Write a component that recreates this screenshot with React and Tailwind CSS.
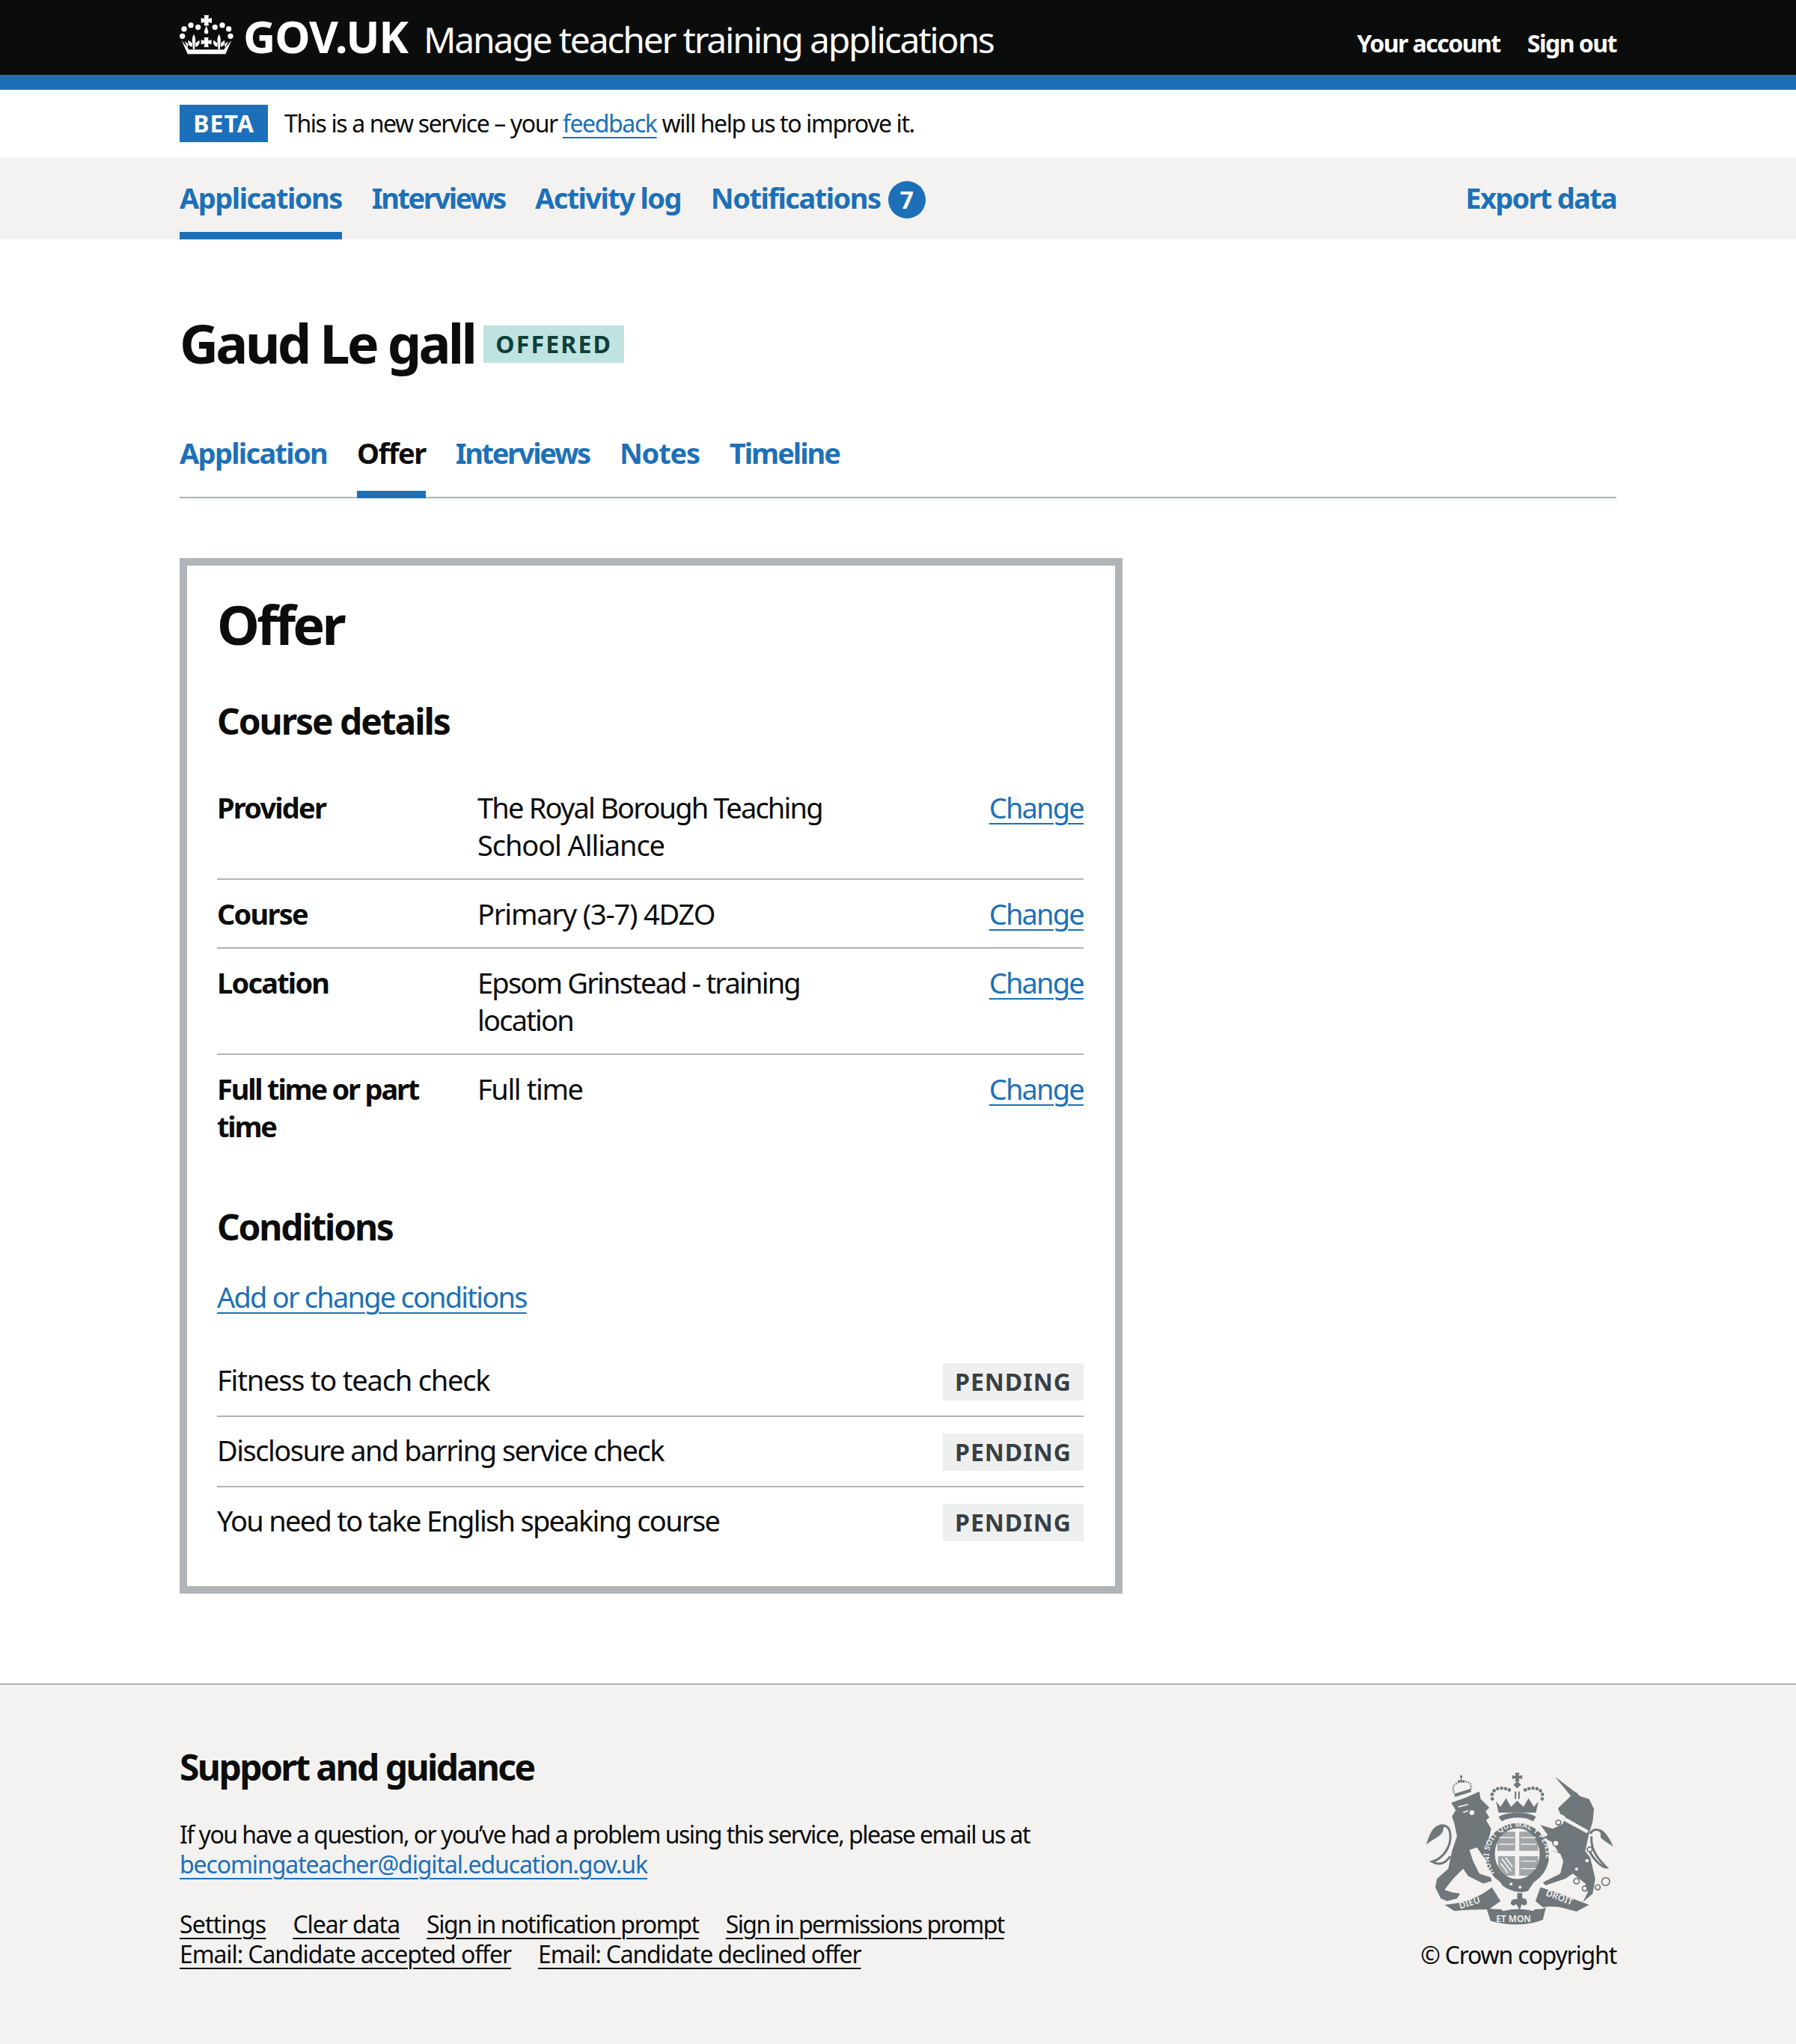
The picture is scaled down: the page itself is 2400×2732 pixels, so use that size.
import React from 'react';

const LINK = 'text-[#1d70b8] underline decoration-2 underline-offset-[6px]';

function Fleur({ cx }) {
  return (
    <path
      d={`M${cx} 140C${cx + 8} 155 ${cx + 8} 165 ${cx + 4} 180L${cx + 4} 200L${cx - 4} 200L${cx - 4} 180C${cx - 8} 165 ${cx - 8} 155 ${cx} 140Z
      M${cx - 6} 176L${cx - 22} 164C${cx - 26} 180 ${cx - 16} 192 ${cx - 6} 190Z
      M${cx + 6} 176L${cx + 22} 164C${cx + 26} 180 ${cx + 16} 192 ${cx + 6} 190Z`}
    />
  );
}

function CrownLogo() {
  return (
    <svg viewBox="0 0 360 270" className="w-[120px] h-[90px] shrink-0 absolute left-[-20px] top-[-18px]" fill="#fff">
      {[[78, 119], [105, 104], [134, 112], [202, 112], [231, 104], [257, 119], [71, 148], [264, 148]].map(([cx, cy]) => (
        <circle key={cx + '-' + cy} cx={cx} cy={cy} r="11" />
      ))}
      <path d="M158 64h19l-2 14 14-3v20l-14-3 2 14h-19l2-14-14 3V75l14 3z" />
      <path d="M167 106c4 12 8 18 8 25a8 8 0 0 1-16 0c0-7 4-13 8-25z" />
      <path d="M158 153h18l-2 13 14-3v18l-14-3 2 14h-18l2-14-14 3v-18l14 3z" />
      <Fleur cx={117} />
      <Fleur cx={218} />
      <path d="M68 165L98 202L237 202L268 165L244 220L92 220Z" />
      <path d="M80 168L95 180L92 196Z M255 168L240 180L243 196Z" />
    </svg>
  );
}

// royal arms, traced by hand from the reference
function Crest() {
  const c = '#6f777b';
  const bg = '#f3f2f1';
  const dots = [[397, 190], [396, 172], [404, 157], [418, 149], [434, 147], [450, 149], [465, 154], [597, 190], [598, 172], [590, 157], [576, 149], [560, 147], [544, 149], [529, 154]];
  return (
    <svg viewBox="120 75 775 630" className="w-[258px] h-[210px]">
      {/* lion */}
      <path fill={c} d="M232 205L290 185L345 160L350 190L385 225L370 240L385 265L372 275L392 310L385 345L370 380L405 420L400 440L370 435L335 385L305 395L320 440L345 490L390 505L395 520L360 530L300 500L280 470L240 510L205 555L235 565L268 570L255 590L215 600L190 590L168 545L175 510L220 470L235 400L255 340L245 290L235 260L250 235Z" />
      <path fill="none" stroke={c} strokeWidth="9" d="M228 420C200 465 165 448 155 442C200 430 234 380 228 330C225 300 205 292 185 298" />
      <path fill={c} d="M205 295C170 288 150 310 132 374C160 350 185 345 198 322Z" />
      <circle cx="315" cy="245" r="10" fill={bg} />
      <path stroke={bg} strokeWidth="5" fill="none" d="M260 222l40-10M280 245l20-8" />
      {/* lion crown */}
      <path fill="none" stroke={c} strokeWidth="7" strokeDasharray="5 5" d="M243 165C230 135 255 120 280 122C300 118 320 125 308 160" />
      <path fill={c} d="M243 170L308 150L312 162L248 182Z M258 115h12v-12h-4l3-8h6l3 8h-4v12h12v8h-28z" />
      {/* unicorn */}
      <path fill={c} d="M648 100L728 162L712 178Z" />
      <path fill={c} d="M660 228L695 195L730 160L750 180L785 190L805 230L800 280L785 330L770 400L790 425L810 510L800 570L760 605L780 565L770 530L720 490L690 510L610 537L600 525L670 490L682 440L670 410L630 395L662 405L640 365L600 345L620 335L590 295L640 310L680 290L690 260L670 250Z" />
      <path fill={bg} d="M690 262L785 315L775 330L683 280Z" />
      <path fill="none" stroke={c} strokeWidth="5" d="M690 262L785 315M683 280L775 330" />
      <path fill="none" stroke={c} strokeWidth="9" d="M790 330C800 310 825 305 840 330M795 340C790 400 830 440 855 465C835 465 800 430 785 395" />
      <path fill={c} d="M830 312C850 320 870 350 882 382C860 365 845 360 832 345Z" />
      {[[735, 520, 11], [768, 550, 10], [820, 545, 10], [852, 522, 16], [662, 285, 10], [652, 368, 12], [788, 393, 10]].map(([cx, cy, r]) => (
        <circle key={cx} cx={cx} cy={cy} r={r} fill={bg} stroke={c} strokeWidth="5" />
      ))}
      <circle cx="777" cy="438" r="7" fill={bg} />
      <circle cx="735" cy="472" r="6" fill={bg} />
      {/* royal crown */}
      <path fill={c} d="M488 85h18l-3 13 14-3v15l-14-2 3 12h-18l3-12-14 2V95l14 3z" />
      <path fill={c} d="M497 118l15 15-15 15-15-15z M487 160h6v30h-6z M501 160h6v30h-6z" />
      {dots.map(([cx, cy]) => (
        <circle key={cx + '-' + cy} cx={cx} cy={cy} r="7" fill={c} />
      ))}
      <path fill={c} d="M412 200l18 22 22-35 20 35 25-25 25 25 20-35 22 35 18-22-10 45H422z" />
      <path fill={c} d="M422 262C450 240 545 240 572 262L560 280C530 260 465 260 435 280Z" />
      {/* garter and shield */}
      <circle cx="497" cy="415" r="128" fill={c} />
      <ellipse cx="497" cy="410" rx="90" ry="102" fill={bg} />
      <path fill={c} d="M417 322h72v76h-72z M505 322h76v76h-76z M420 420h68v78h-68z M505 420h76v78h-76z" opacity="0.62" />
      <path stroke={bg} strokeWidth="4" d="M425 345h60M425 372h60M512 345h60M512 372h60M512 440h60M512 470h60" />
      <path fill="none" stroke={bg} strokeWidth="5" d="M435 430l38 50M450 425l28 38M430 448l30 40" />
      <defs>
        <path id="garter" d="M410 490A114 114 0 1 1 585 490" fill="none" />
      </defs>
      <text fontFamily="'Noto Sans',sans-serif" fontSize="30" fontWeight="600" fill={bg} letterSpacing="1">
        <textPath href="#garter" startOffset="4">HONI SOIT QUI MAL Y PENSE</textPath>
      </text>
      <path fill={c} d="M425 520C465 540 530 540 570 515L540 560C510 570 470 560 440 540Z" />
      <circle cx="472" cy="532" r="6" fill={bg} />
      <circle cx="508" cy="545" r="6" fill={bg} />
      {/* motto */}
      <path fill={c} d="M205 615C270 610 340 590 395 545L430 600L395 625C380 640 330 630 245 640Z" />
      <path fill={c} d="M570 600L590 545C640 560 720 590 785 615L735 642C690 630 650 615 600 625Z" />
      <path fill={c} d="M372 625C410 640 430 625 440 640C480 630 520 630 560 640C570 625 590 640 612 625L600 675C530 700 460 700 390 680Z" />
      <path fill={c} d="M497 568h20v22c15-5 22 10 18 22-8 10-18 2-20 0l-8 25-14-25c-6 5-16 10-22-2 0-14 10-20 26-17z" />
      <text x="268" y="632" fontFamily="'Noto Sans',sans-serif" fontSize="36" fontWeight="600" fill={bg} transform="rotate(-18 268 632)">DIEU</text>
      <text x="412" y="685" fontFamily="'Noto Sans',sans-serif" fontSize="36" fontWeight="600" fill={bg}>ET MON</text>
      <text x="610" y="578" fontFamily="'Noto Sans',sans-serif" fontSize="36" fontWeight="600" fill={bg} transform="rotate(20 610 578)">DROIT</text>
    </svg>
  );
}

function Tag({ children, className }) {
  return (
    <span className={'inline-flex items-center justify-center h-[50px] text-[32px] font-bold uppercase ' + className}>
      {children}
    </span>
  );
}

function SummaryRow({ label, children, last }) {
  return (
    <div className={'flex py-[20px] text-[38px] leading-[50px] ' + (last ? '' : 'border-b-2 border-[#b1b4b6]')}>
      <div className="w-[348px] font-bold tracking-[-1.8px]">{label}</div>
      <div className="flex-1 tracking-[-1.8px]">{children}</div>
      <a className={LINK + ' tracking-[-1.8px]'}>Change</a>
    </div>
  );
}

function ConditionRow({ children, last }) {
  return (
    <div className={'flex justify-between items-center pt-[22px] pb-[20px] ' + (last ? '' : 'border-b-2 border-[#b1b4b6]')}>
      <span className="text-[38px] leading-[50px] mt-[-6px]">{children}</span>
      <Tag className="w-[188px] bg-[#eeefef] text-[#383f43] tracking-[1px]">Pending</Tag>
    </div>
  );
}

export default function App() {
  return (
    <div className="min-h-[2732px] bg-white text-[#0b0c0c] font-['Noto_Sans',sans-serif]">
      <header className="bg-[#0b0c0c] border-b-[20px] border-[#1d70b8] text-white">
        <div className="w-[1920px] h-[100px] mx-auto flex items-center justify-between relative">
          <div className="flex items-center pl-[85px] relative">
            <CrownLogo />
            <span className="text-[60px] leading-[60px] font-bold tracking-[-1.2px] mt-[-4px]">GOV.UK</span>
            <span className="text-[48px] leading-[60px] ml-[21px] tracking-[-2.2px] mt-[6px]">Manage teacher training applications</span>
          </div>
          <div className="flex gap-[36px] text-[32px] font-bold tracking-[-1.5px] mt-[16px]">
            <a>Your account</a>
            <a>Sign out</a>
          </div>
        </div>
      </header>

      <div className="w-[1920px] h-[90px] mx-auto flex items-center">
        <span className="inline-flex items-center justify-center w-[118px] h-[50px] bg-[#1d70b8] text-white text-[32px] font-bold tracking-[1px]">BETA</span>
        <span className="ml-[22px] text-[32px] tracking-[-1.4px]">
          This is a new service – your <a className={LINK}>feedback</a> will help us to improve it.
        </span>
      </div>

      <nav className="bg-[#f3f2f1] h-[110px]">
        <div className="w-[1920px] h-full mx-auto flex justify-between text-[38px] font-bold text-[#1d70b8]">
          <div className="flex gap-[40px]">
            <a className="flex items-center h-full pt-[8px] border-b-[10px] border-[#1d70b8] tracking-[-1.5px]">Applications</a>
            <a className="flex items-center pb-[2px] tracking-[-2.4px]">Interviews</a>
            <a className="flex items-center pb-[2px] tracking-[-1.6px]">Activity log</a>
            <a className="flex items-center pb-[2px] tracking-[-1.5px]">
              Notifications
              <span className="ml-[10px] mt-[6px] flex items-center justify-center w-[50px] h-[50px] rounded-full bg-[#1d70b8] text-white text-[32px] tracking-normal">7</span>
            </a>
          </div>
          <a className="flex items-center pb-[2px] tracking-[-1.7px]">Export data</a>
        </div>
      </nav>

      <main className="w-[1920px] mx-auto pt-[100px] pb-[120px]">
        <div className="flex items-center h-[80px]">
          <h1 className="text-[72px] leading-[80px] font-bold tracking-[-3.8px] mt-[-4px]">Gaud Le gall</h1>
          <Tag className="ml-[12px] w-[188px] bg-[#bfe3e0] text-[#10403c] tracking-[2.2px]">Offered</Tag>
        </div>

        <div className="mt-[80px] h-[86px] border-b-2 border-[#b1b4b6] flex gap-[40px] text-[38px] leading-[50px] font-bold text-[#1d70b8]">
          <a className="tracking-[-1.7px]">Application</a>
          <a className="h-[86px] border-b-[10px] border-[#1d70b8] text-[#0b0c0c] tracking-[-1.5px]">Offer</a>
          <a className="tracking-[-2.3px]">Interviews</a>
          <a className="tracking-[-1.2px]">Notes</a>
          <a className="tracking-[-2px]">Timeline</a>
        </div>

        <section className="mt-[80px] w-[1260px] border-[10px] border-[#b1b4b6] pl-[40px] pr-[42px] pt-[38px] pb-[40px]">
          <h2 className="text-[72px] leading-[80px] font-bold tracking-[-3.8px] mb-[60px]">Offer</h2>
          <h3 className="text-[48px] leading-[60px] font-bold tracking-[-2.1px] mb-[40px]">Course details</h3>
          <SummaryRow label="Provider">
            The Royal Borough Teaching<br /><span className="tracking-[-1.1px]">School Alliance</span>
          </SummaryRow>
          <SummaryRow label="Course"><span className="tracking-[-1.2px]">Primary (3-7) 4DZO</span></SummaryRow>
          <SummaryRow label="Location">Epsom Grinstead - training<br />location</SummaryRow>
          <SummaryRow label={<span className="tracking-[-2.2px]">Full time or part<br />time</span>} last>
            <span className="tracking-[-1.4px]">Full time</span>
          </SummaryRow>

          <h3 className="mt-[60px] text-[48px] leading-[60px] font-bold tracking-[-2.25px] mb-[40px]">Conditions</h3>
          <a className={LINK + ' text-[38px] leading-[50px] tracking-[-1.8px] block w-fit mt-[-2px]'}>Add or change conditions</a>
          <div className="mt-[42px]">
            <ConditionRow><span className="tracking-[-1.2px]">Fitness to teach check</span></ConditionRow>
            <ConditionRow><span className="tracking-[-1.5px]">Disclosure and barring service check</span></ConditionRow>
            <ConditionRow last><span className="tracking-[-1.7px]">You need to take English speaking course</span></ConditionRow>
          </div>
        </section>
      </main>

      <footer className="bg-[#f3f2f1] border-t-2 border-[#b1b4b6]">
        <div className="w-[1920px] mx-auto pt-[80px] pb-[100px] flex justify-between">
          <div>
            <h2 className="text-[48px] leading-[60px] font-bold tracking-[-2.6px]">Support and guidance</h2>
            <p className="mt-[40px] text-[32px] leading-[40px] tracking-[-1.52px]">
              If you have a question, or you’ve had a problem using this service, please email us at<br />
              <a className={LINK + ' tracking-[-1.1px]'}>becomingateacher@digital.education.gov.uk</a>
            </p>
            <div className="mt-[40px] text-[32px] leading-[40px] underline decoration-2 underline-offset-[6px]">
              <div className="flex gap-[36px]">
                <a className="tracking-[-0.8px]">Settings</a>
                <a className="tracking-[-1.05px]">Clear data</a>
                <a className="tracking-[-1.4px]">Sign in notification prompt</a>
                <a className="tracking-[-1.6px]">Sign in permissions prompt</a>
              </div>
              <div className="flex gap-[36px]">
                <a className="tracking-[-1.1px]">Email: Candidate accepted offer</a>
                <a className="tracking-[-1.2px]">Email: Candidate declined offer</a>
              </div>
            </div>
          </div>
          <div className="flex flex-col items-end pt-[34px]">
            <Crest />
            <span className="mt-[17px] text-[32px] leading-[40px] tracking-[-1.2px]">© Crown copyright</span>
          </div>
        </div>
      </footer>
    </div>
  );
}
